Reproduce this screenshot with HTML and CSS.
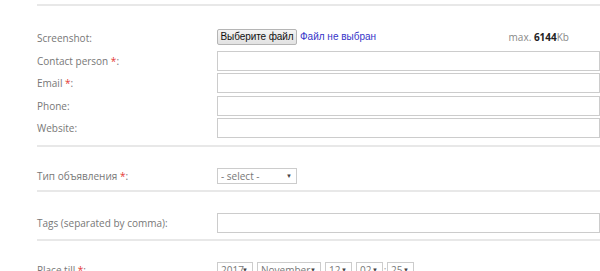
FILE: index.html
```html
<!DOCTYPE html>
<html lang="en">
<head>
  <meta charset="UTF-8">
  <title>Add listing</title>
  <link rel="stylesheet" href="styles.css">
</head>
<body>
  <form class="ad-form">

    <!-- contacts -->
    <div class="section">
      <div class="row">
        <label class="label">Screenshot:</label>
        <div class="field file-field">
          <button type="button" class="file-btn">Выберите файл</button>
          <span class="file-name">Файл не выбран</span>
          <span class="file-max">max. <b>6144</b>Kb</span>
        </div>
      </div>
      <div class="row">
        <label class="label">Contact person <span class="req">*</span>:</label>
        <input type="text" class="text-input">
      </div>
      <div class="row">
        <label class="label">Email <span class="req">*</span>:</label>
        <input type="text" class="text-input">
      </div>
      <div class="row">
        <label class="label">Phone:</label>
        <input type="text" class="text-input">
      </div>
      <div class="row">
        <label class="label">Website:</label>
        <input type="text" class="text-input">
      </div>
    </div>

    <!-- type -->
    <div class="section">
      <div class="row short">
        <label class="label">Тип объявления <span class="req">*</span>:</label>
        <span class="select-box type-select">
          <select><option>- select -</option></select>
        </span>
      </div>
    </div>

    <!-- tags -->
    <div class="section">
      <div class="row">
        <label class="label">Tags (separated by comma):</label>
        <input type="text" class="text-input">
      </div>
    </div>

    <!-- date -->
    <div class="section">
      <div class="row short">
        <label class="label">Place till <span class="req">*</span>:</label>
        <div class="date-field">
          <span class="select-box w-year"><select><option>2017</option></select></span>
          <span class="sep">-</span>
          <span class="select-box w-month"><select><option>November</option></select></span>
          <span class="sep">-</span>
          <span class="select-box w-small"><select><option>12</option></select></span>
          <span class="sep"></span>
          <span class="select-box w-small"><select><option>02</option></select></span>
          <span class="sep">:</span>
          <span class="select-box w-small"><select><option>25</option></select></span>
        </div>
      </div>
    </div>

  </form>
</body>
</html>
```

FILE: styles.css
```css
html, body {
  margin: 0;
  overflow: hidden;
  background-color: #fff;
}

body {
  font-family: "Open Sans", Arial, sans-serif;
  font-size: 10px;
  color: #777;
}

.ad-form {
  padding: 4px 0 0 37px;
}

.section {
  border-top: 2px solid #e8e8e8;
  padding: 22px 0 6.5px;
  display: flex;
  flex-direction: column;
  gap: 2.5px;
}

.section + .section {
  padding-top: 21px;
  padding-bottom: 6px;
}

.row {
  display: flex;
  align-items: center;
  height: 20px;
}

.row.short {
  height: 16px;
}

.label {
  width: 180px;
  flex-shrink: 0;
}

.req {
  color: #e53935;
}

.text-input {
  box-sizing: border-box;
  width: 420px;
  height: 20px;
  border: 1px solid #ccc;
  padding: 0 4px;
  margin: 0;
  outline: none;
}

.file-field {
  display: flex;
  align-items: center;
  width: 352px;
  margin-top: -3px;
  font-family: Arial, "Liberation Sans", sans-serif;
  font-size: 10px;
}

.file-btn {
  height: 16px;
  width: 80px;
  padding: 0;
  border: 1px solid #b5b5b5;
  border-radius: 2px;
  background: linear-gradient(#f4f4f4, #e2e2e2);
  font-family: Arial, "Liberation Sans", sans-serif;
  font-size: 10px;
  letter-spacing: -0.1px;
  white-space: nowrap;
  color: #111;
}

.file-name {
  margin-left: 3px;
  color: #3535c8;
}

.file-max {
  margin-left: auto;
  font-family: "Open Sans", Arial, sans-serif;
  font-size: 10px;
  color: #888;
}

.file-max b {
  color: #222;
}

.select-box {
  position: relative;
  display: inline-block;
  box-sizing: border-box;
  height: 16px;
  border: 1px solid #ccc;
}

.select-box select {
  appearance: none;
  -webkit-appearance: none;
  border: none;
  background: transparent;
  width: 100%;
  height: 14px;
  padding: 0 0 0 3px;
  margin: 0;
  font-family: "Open Sans", Arial, sans-serif;
  font-size: 10px;
  line-height: 14px;
  color: #777;
  outline: none;
}

.select-box::after {
  content: "▼";
  position: absolute;
  right: 4px;
  top: 3px;
  font-size: 6px;
  line-height: 8px;
  color: #444;
  pointer-events: none;
}

.type-select { width: 80px; }
.w-year { width: 36px; }
.w-month { width: 64px; }
.w-small { width: 27px; }

.date-field {
  display: flex;
  align-items: center;
  height: 16px;
}

.sep {
  width: 4px;
  text-align: center;
  color: #999;
}
```
